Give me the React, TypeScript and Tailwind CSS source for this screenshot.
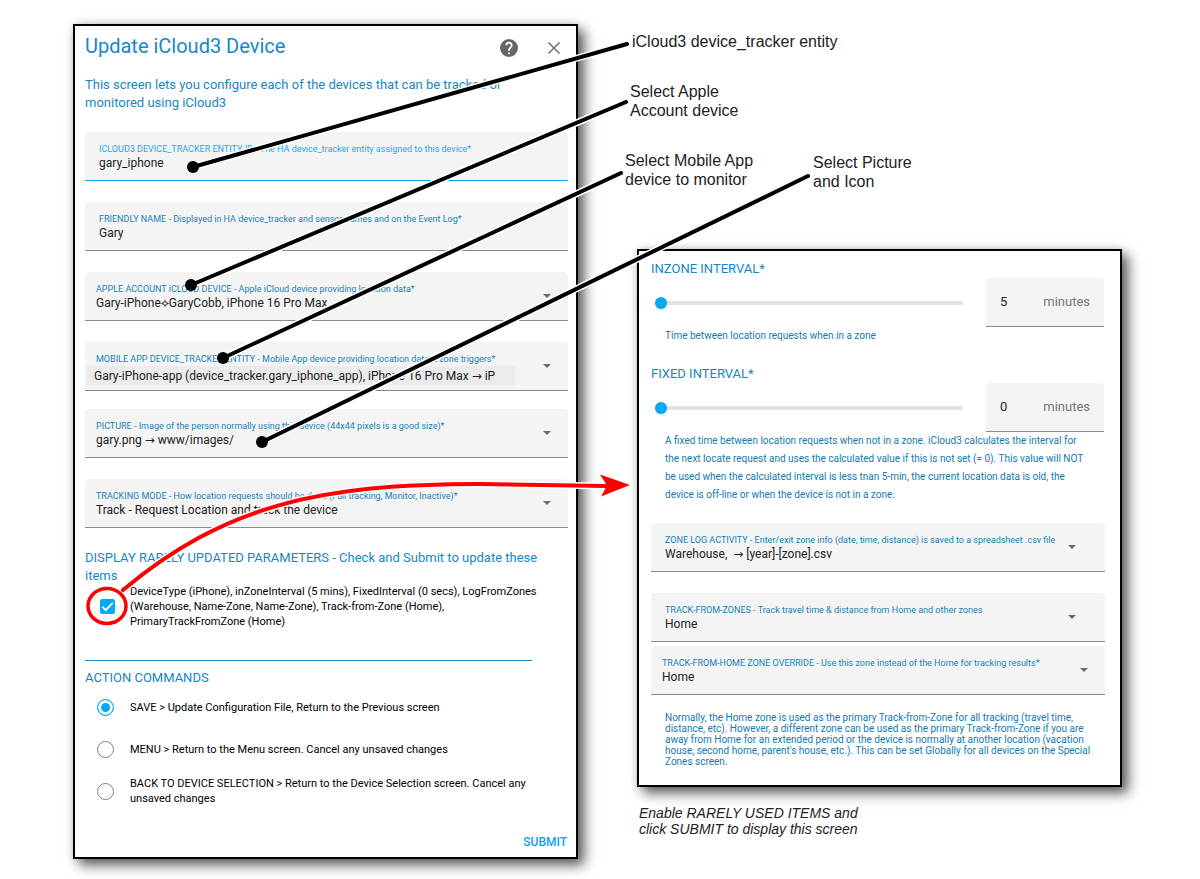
import { useId, useState } from "react";

const fieldShell = "flex flex-col rounded-t bg-[#f4f4f4] border-b";

function TextField({ label, value, focused = false }: { label: string; value: string; focused?: boolean }) {
  const id = useId();
  return (
    <div className={`${fieldShell} px-3.5 pt-[11px] pb-[9px] ${focused ? "border-[#03a9f4]" : "border-[#8a8a8a]"}`}>
      <label htmlFor={id} className={`text-[9px] leading-3 whitespace-nowrap ${focused ? "text-[#1ea7ee]" : "text-[#1782b8]"}`}>
        {label}
      </label>
      <input id={id} defaultValue={value} className="h-4 w-full bg-transparent text-xs leading-4 text-[#212121] outline-none" />
    </div>
  );
}

type SelectProps = {
  label: string;
  value: string;
  padding?: string;
  caret?: string;
  highlighted?: boolean;
};

function SelectField({ label, value, padding = "pl-[11px]", caret = "right-[17px]", highlighted = false }: SelectProps) {
  const id = useId();
  return (
    <div className={`${fieldShell} relative border-[#8a8a8a] pt-[11px] ${highlighted ? "pb-[5px]" : "pb-[9px]"}`}>
      <label htmlFor={id} className={`${padding} text-[9px] leading-3 whitespace-nowrap text-[#1782b8]`}>
        {label}
      </label>
      <select
        id={id}
        className={`appearance-none text-xs text-[#212121] outline-none ${
          highlighted ? "mt-px mr-[53px] ml-px h-[19px] bg-[#ebebeb] pl-2" : `${padding} mr-[53px] h-4 bg-transparent`
        }`}
      >
        <option>{value}</option>
      </select>
      <svg viewBox="0 0 8 4" className={`pointer-events-none absolute top-[22px] h-1 w-2 ${caret}`} fill="#6b6b6b">
        <path d="M0 0H8L4 4Z" />
      </svg>
    </div>
  );
}

function SliderField({ label, value, children }: { label: string; value: number; children: React.ReactNode }) {
  const id = useId();
  return (
    <section>
      <label htmlFor={id} className="block text-[13px] leading-4 text-[#1787c4]">
        {label}
      </label>
      <div className="mt-px mr-px flex items-center gap-[23px]">
        <input
          id={id}
          type="range"
          min={value}
          max={120}
          defaultValue={value}
          className="ml-1 h-3 min-w-0 flex-1 appearance-none bg-transparent [&::-webkit-slider-runnable-track]:h-1 [&::-webkit-slider-runnable-track]:rounded-full [&::-webkit-slider-runnable-track]:bg-[#e4e1e9] [&::-webkit-slider-thumb]:-mt-1 [&::-webkit-slider-thumb]:size-3 [&::-webkit-slider-thumb]:appearance-none [&::-webkit-slider-thumb]:rounded-full [&::-webkit-slider-thumb]:bg-[#03a9f4] [&::-webkit-slider-thumb]:shadow"
        />
        <div className="flex h-[49px] w-[118px] items-center justify-between rounded-t border-b border-[#8a8a8a] bg-[#f4f4f4] px-3.5 text-[13px]">
          <input aria-label={`${label} minutes`} defaultValue={value} className="w-8 bg-transparent text-[#212121] outline-none" />
          <span className="text-[#777]">minutes</span>
        </div>
      </div>
      <p className="ml-3.5 text-[10px] leading-[18px] whitespace-nowrap text-[#127ab0]">{children}</p>
    </section>
  );
}

const actions = [
  { id: "save", text: <>SAVE &gt; Update Configuration File, Return to the Previous screen</> },
  { id: "menu", text: <>MENU &gt; Return to the Menu screen. Cancel any unsaved changes</> },
  { id: "back", text: <>BACK TO DEVICE SELECTION &gt; Return to the Device Selection screen. Cancel any<br />unsaved changes</> },
];

const panel = "border-2 border-black bg-white shadow-[6px_6px_12px_rgba(0,0,0,0.65),0_0_8px_rgba(0,0,0,0.12)]";

function DevicePanel() {
  const [action, setAction] = useState("save");
  return (
    <form className={`${panel} px-2 pb-[7px] pl-2.5`} onSubmit={(e) => e.preventDefault()}>
      <header className="flex h-11 items-center">
        <h1 className="flex-1 pb-1 text-[20px] leading-6 text-[#1787c9]">Update iCloud3 Device</h1>
        <button type="button" aria-label="Help" className="mr-[30px]">
          <svg viewBox="2 2 20 20" className="size-[18px]" fill="#666">
            <path d="M15.07 11.25l-.9.92C13.45 12.89 13 13.5 13 15h-2v-.5c0-1.11.45-2.11 1.17-2.83l1.24-1.26c.37-.36.59-.86.59-1.41a2 2 0 0 0-4 0H8a4 4 0 1 1 8 0c0 .88-.36 1.67-.93 2.25M13 19h-2v-2h2M12 2a10 10 0 1 0 0 20 10 10 0 0 0 0-20Z" />
          </svg>
        </button>
        <button type="button" aria-label="Close" className="mr-2">
          <svg viewBox="0 0 12 12" className="size-3" fill="none" stroke="#666" strokeWidth="1.4">
            <path d="M.5.5l11 11M11.5.5l-11 11" />
          </svg>
        </button>
      </header>
      <p className="mt-1.5 text-[13px] leading-[18px] whitespace-nowrap text-[#1787c4]">
        This screen lets you configure each of the devices that can be tracked or
        <br />
        monitored using iCloud3
      </p>

      <div className="mt-5 flex flex-col gap-[21px]">
        <TextField focused label="ICLOUD3 DEVICE_TRACKER ENTITY ID - The HA device_tracker entity assigned to this device*" value="gary_iphone" />
        <TextField label="FRIENDLY NAME - Displayed in HA device_tracker and sensor names and on the Event Log*" value="Gary" />
        <SelectField label="APPLE ACCOUNT iCLOUD DEVICE - Apple iCloud device providing location data*" value="Gary-iPhone⟡GaryCobb, iPhone 16 Pro Max" />
        <SelectField
          highlighted
          label="MOBILE APP DEVICE_TRACKER ENTITY - Mobile App device providing location data & zone triggers*"
          value="Gary-iPhone-app (device_tracker.gary_iphone_app), iPhone 16 Pro Max → iP"
        />
      </div>
      <div className="mt-[18px] flex flex-col gap-[21px]">
        <SelectField label="PICTURE - Image of the person normally using this device (44x44 pixels is a good size)*" value="gary.png → www/images/" />
        <SelectField label="TRACKING MODE - How location requests should be done (Full tracking, Monitor, Inactive)*" value="Track - Request Location and track the device" />
      </div>

      <h2 className="mt-[21px] text-[13px] leading-[18px] whitespace-nowrap text-[#1787c4]">
        DISPLAY RARELY UPDATED PARAMETERS - Check and Submit to update these
        <br />
        items
      </h2>
      <label className="-mt-px flex items-center gap-[15px] pl-[15px] text-[11px] leading-[15px] text-black">
        <span className="grid size-[15px] place-items-center">
          <input type="checkbox" defaultChecked className="col-start-1 row-start-1 size-[15px] appearance-none rounded-[2px] border border-[#757575] checked:border-[#03a9f4] checked:bg-[#03a9f4]" />
          <svg viewBox="0 0 15 15" className="pointer-events-none col-start-1 row-start-1 size-[15px]" fill="none" stroke="#fff" strokeWidth="1.8">
            <path d="M2.3 7.6l3.4 3.5 7-7.2" />
          </svg>
        </span>
        <span className="whitespace-nowrap">
          DeviceType (iPhone), inZoneInterval (5 mins), FixedInterval (0 secs), LogFromZones
          <br />
          (Warehouse, Name-Zone, Name-Zone), Track-from-Zone (Home),
          <br />
          PrimaryTrackFromZone (Home)
        </span>
      </label>

      <hr className="mt-[31px] mr-9 border-[#0c8ac6]" />
      <fieldset>
        <legend className="pt-2 text-[13px] leading-[18px] text-[#1787c4]">ACTION COMMANDS</legend>
        <div className="-mt-px">
          {actions.map((a) => (
            <label key={a.id} className="flex h-[42px] items-center gap-4 pl-3 text-[11px] leading-[15px] whitespace-nowrap text-black">
              <input
                type="radio"
                name="action"
                checked={action === a.id}
                onChange={() => setAction(a.id)}
                className="size-[17px] shrink-0 appearance-none rounded-full border border-[#808080] checked:border-[#03a9f4] checked:bg-[#03a9f4] checked:shadow-[inset_0_0_0_3px_#fff]"
              />
              <span>{a.text}</span>
            </label>
          ))}
        </div>
      </fieldset>
      <div className="mt-[22px] flex justify-end pr-px">
        <button className="text-xs leading-4 font-medium text-[#109ff0]">SUBMIT</button>
      </div>
    </form>
  );
}

function ZonePanel() {
  return (
    <form className={`${panel} pt-2.5 pr-[15px] pb-[18px] pl-3`}>
      <div className="flex flex-col gap-[21px]">
        <SliderField label="INZONE INTERVAL*" value={5}>
          Time between location requests when in a zone
        </SliderField>
        <SliderField label="FIXED INTERVAL*" value={0}>
          A fixed time between location requests when not in a zone. iCloud3 calculates the interval for
          <br />
          the next locate request and uses the calculated value if this is not set (= 0). This value will NOT
          <br />
          be used when the calculated interval is less tnan 5-min, the current location data is old, the
          <br />
          device is off-line or when the device is not in a zone.
        </SliderField>
      </div>
      <div className="mt-[19px] flex flex-col gap-[21px]">
        <SelectField padding="pl-3.5" caret="right-[29px]" label="ZONE LOG ACTIVITY - Enter/exit zone info (date, time, distance) is saved to a spreadsheet .csv file" value={"Warehouse,\u00a0 → [year]-[zone].csv"} />
        <SelectField padding="pl-3.5" caret="right-[29px]" label="TRACK-FROM-ZONES - Track travel time & distance from Home and other zones" value="Home" />
      </div>
      <div className="mt-1">
        <SelectField label="TRACK-FROM-HOME ZONE OVERRIDE - Use this zone instead of the Home for tracking results*" value="Home" />
      </div>
      <p className="mt-[17px] ml-3.5 text-[10px] leading-[11px] whitespace-nowrap text-[#127ab0]">
        Normally, the Home zone is used as the primary Track-from-Zone for all tracking (travel time,
        <br />
        distance, etc). However, a different zone can be used as the primary Track-from-Zone if you are
        <br />
        away from Home for an extended period or the device is normally at another location (vacation
        <br />
        house, second home, parent's house, etc.). This can be set Globally for all devices on the Special
        <br />
        Zones screen.
      </p>
    </form>
  );
}

const pointers = [
  [193, 167, 627, 44],
  [191, 285, 626, 102],
  [223, 358, 621, 173],
  [262, 442, 808, 176],
];

const redArc = "M123 590C225 505 320 484 480 484L606 486";

function Annotations() {
  return (
    <svg viewBox="0 0 1200 879" preserveAspectRatio="none" className="pointer-events-none absolute top-0 left-0 h-[879px] w-full" fill="none" strokeLinecap="round">
      {pointers.map(([x1, y1, x2, y2]) => (
        <g key={y1}>
          <path d={`M${x1} ${y1}L${x2} ${y2}`} stroke="#fff" strokeWidth="7" strokeLinecap="butt" />
          <path d={`M${x1} ${y1}L${x2} ${y2}`} stroke="#000" strokeWidth="4" />
          <circle cx={x1} cy={y1} r="6" fill="#000" />
        </g>
      ))}
      <path d={redArc} stroke="#fff" strokeWidth="7" />
      <path d={redArc} stroke="#f00" strokeWidth="4" />
      <path d="M630 485L600 474.500 607 485.500 601 496.500Z" fill="#f00" />
      <ellipse cx="107" cy="606" rx="19" ry="17.500" stroke="#f00" strokeWidth="3.500" />
    </svg>
  );
}

export default function App() {
  return (
    <main className="relative mx-auto max-w-[1200px] bg-white font-[Roboto,'DejaVu_Sans',sans-serif]">
      <div className="grid grid-cols-[minmax(0,505fr)_minmax(0,497fr)] items-start gap-[47px] pt-6 pr-[78px] pb-5 pl-[73px]">
        <DevicePanel />
        <div>
          <div className="font-['Liberation_Sans',sans-serif] text-[16px] leading-[19px] text-[#222]">
            <p className="pt-2 pl-[7px]">iCloud3 device_tracker entity</p>
            <p className="mt-[31px] pl-[5px]">
              Select Apple
              <br />
              Account device
            </p>
            <div className="mt-[31px] flex">
              <p className="w-[188px]">
                Select Mobile App
                <br />
                device to monitor
              </p>
              <p className="pt-0.5">
                Select Picture
                <br />
                and Icon
              </p>
            </div>
          </div>
          <div className="mt-[58px] ml-3">
            <ZonePanel />
            <p className="mt-[18px] ml-0.5 font-['Liberation_Sans',sans-serif] text-[14px] leading-4 text-[#222] italic">
              Enable RARELY USED ITEMS and
              <br />
              click SUBMIT to display this screen
            </p>
          </div>
        </div>
      </div>
      <Annotations />
    </main>
  );
}
